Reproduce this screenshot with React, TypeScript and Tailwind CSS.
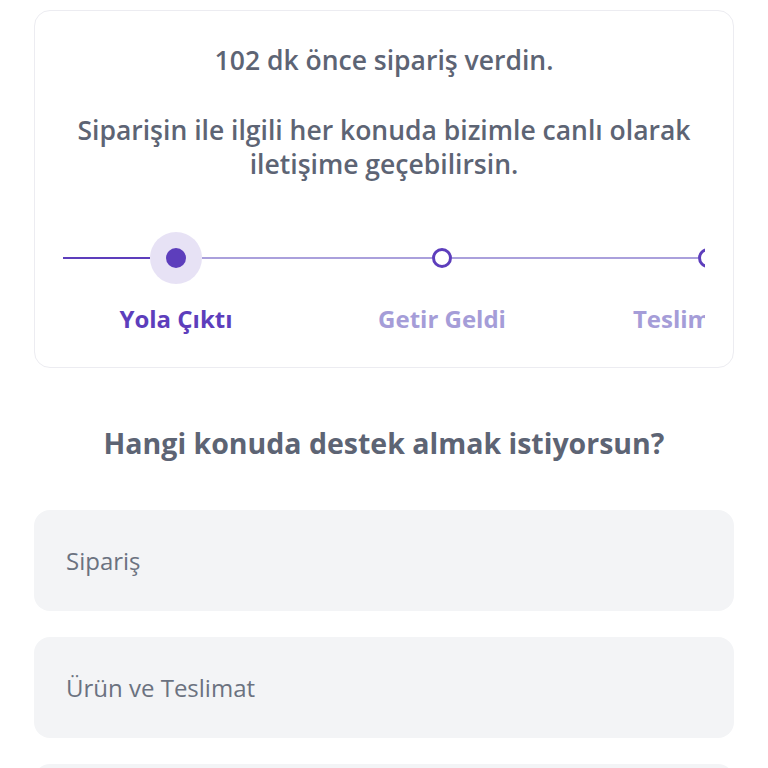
import React from "react";

const steps = [
  { label: "Yola Çıktı", active: true },
  { label: "Getir Geldi", active: false },
  { label: "Teslim Edildi", active: false },
];

export default function App() {
  return (
    <div
      className="w-[768px] h-[768px] overflow-hidden bg-white"
      style={{ fontFamily: '"Open Sans", "Noto Sans", sans-serif' }}
    >
      <div className="px-[34px] pt-[10px]">
        <div className="rounded-[16px] border border-[#ececf1] pt-[32px] pb-[33px] px-[28px]">
          <p className="text-center text-[26.5px] leading-[34px] font-semibold text-[#5d6474]">
            102 dk önce sipariş verdin.
          </p>
          <p className="mt-[36px] text-center text-[26.5px] leading-[34px] font-semibold text-[#5d6474]">
            Siparişin ile ilgili her konuda bizimle canlı olarak iletişime geçebilirsin.
          </p>
          <div className="mt-[51px] overflow-hidden">
            <div className="flex -ml-[20px]">
              {steps.map((s, i) => (
                <div key={i} className="w-[266px] shrink-0 flex flex-col items-center">
                  <div className="w-full h-[52px] flex items-center">
                    <div
                      className={
                        "flex-1 h-[2px] " +
                        (i === 0 ? "bg-[#5d3ebc]" : "bg-[#aaa0dc]")
                      }
                    />
                    {s.active ? (
                      <div className="w-[52px] h-[52px] rounded-full bg-[#5d3ebc]/15 flex items-center justify-center shrink-0">
                        <div className="w-[20px] h-[20px] rounded-full bg-[#5d3ebc]" />
                      </div>
                    ) : (
                      <div className="w-[20px] h-[20px] rounded-full border-[3px] border-[#5d3ebc] bg-white shrink-0" />
                    )}
                    <div className="flex-1 h-[2px] bg-[#aaa0dc]" />
                  </div>
                  <div
                    className={
                      "mt-[20px] text-[24px] leading-[30px] font-bold whitespace-nowrap " +
                      (s.active ? "text-[#5d3ebc]" : "text-[#a59dd8]")
                    }
                  >
                    {s.label}
                  </div>
                </div>
              ))}
            </div>
          </div>
        </div>
        <h2 className="mt-[57px] text-center text-[28.5px] leading-[36px] font-bold text-[#5d6474]">
          Hangi konuda destek almak istiyorsun?
        </h2>
        <div className="mt-[49px] flex flex-col gap-[26px]">
          {["Sipariş", "Ürün ve Teslimat", "Ödeme"].map((t) => (
            <div
              key={t}
              className="h-[101px] rounded-[16px] bg-[#f3f4f6] flex items-center px-[32px] text-[24px] text-[#6b7280]"
            >
              {t}
            </div>
          ))}
        </div>
      </div>
    </div>
  );
}
